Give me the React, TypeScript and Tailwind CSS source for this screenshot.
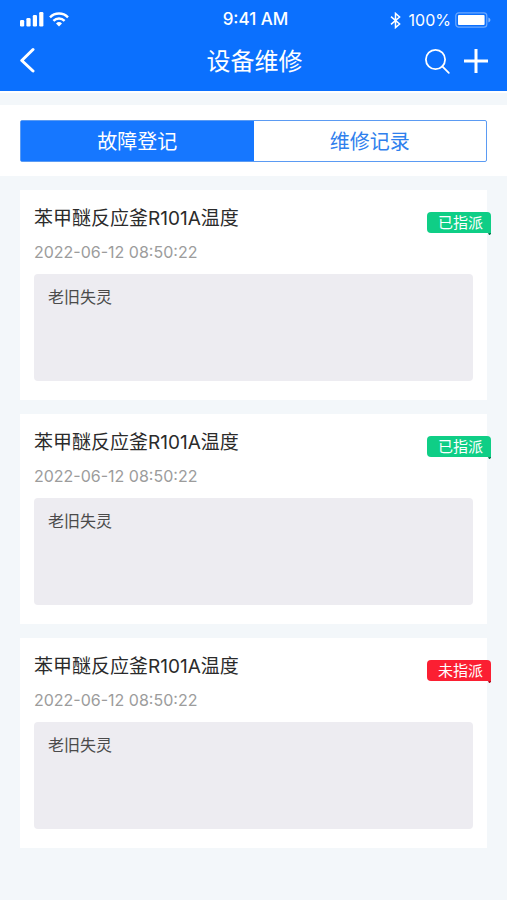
import { useState } from "react"

const tabs = ["故障登记", "维修记录"]

const records = [
  { id: 1, title: "苯甲醚反应釜R101A温度", time: "2022-06-12 08:50:22", note: "老旧失灵", assigned: true },
  { id: 2, title: "苯甲醚反应釜R101A温度", time: "2022-06-12 08:50:22", note: "老旧失灵", assigned: true },
  { id: 3, title: "苯甲醚反应釜R101A温度", time: "2022-06-12 08:50:22", note: "老旧失灵", assigned: false },
]

type RepairRecord = (typeof records)[number]

function StatusBar() {
  return (
    <div className="grid h-10 grid-cols-3 items-center pr-4 pl-5 font-['Inter','Liberation_Sans',sans-serif] text-base">
      <div className="flex items-center gap-1">
        <svg width="25" height="16" viewBox="0 0 25 16" fill="currentColor" aria-hidden="true">
          <rect x="0" y="8" width="4.2" height="6.500" rx="1.2" />
          <rect x="6.4" y="6" width="4.2" height="8.500" rx="1.2" />
          <rect x="12.8" y="3" width="4.2" height="11.500" rx="1.2" />
          <rect x="19.2" y="0" width="4.2" height="14.500" rx="1.2" />
        </svg>
        <svg width="20" height="16" viewBox="0 0 20 16" aria-hidden="true">
          <g fill="none" stroke="currentColor" strokeWidth="2.4">
            <path d="M1 5.300a12.700 12.700 0 0 1 18 0" />
            <path d="M4.400 8.800a7.900 7.900 0 0 1 11.200 0" />
          </g>
          <path d="M7 11.400a4.400 4.400 0 0 1 6 0L10 14.600z" fill="currentColor" />
        </svg>
      </div>
      <span className="text-center text-[17px] font-medium">9:41 AM</span>
      <div className="flex items-center justify-end gap-1">
        <svg width="11" height="17" viewBox="0 0 11 17" fill="none" stroke="currentColor" strokeWidth="1.5" aria-hidden="true">
          <path d="M1 4.600l8.600 7.400-4.100 3.600V1.400L9.600 5 1 12.400" />
        </svg>
        <span className="pl-1">100%</span>
        <svg width="36" height="16" viewBox="0 0 36 16" aria-hidden="true">
          <rect x="0.800" y="0.800" width="31" height="14.400" rx="3" fill="none" stroke="currentColor" strokeOpacity="0.4" strokeWidth="1.200" />
          <rect x="3" y="3" width="26.600" height="10" rx="1" fill="currentColor" />
          <path d="M33.400 5.500c1.200.400 2 1.300 2 2.500s-.800 2.100-2 2.500z" fill="currentColor" fillOpacity="0.5" />
        </svg>
      </div>
    </div>
  )
}

function NavBar() {
  return (
    <div className="grid h-[51px] grid-cols-3 items-start pr-[18px] pl-5">
      <button type="button" aria-label="返回" className="flex h-10 w-8 items-center">
        <svg width="20" height="26" viewBox="0 0 20 26" fill="none" stroke="currentColor" strokeWidth="3" strokeLinecap="round" strokeLinejoin="round">
          <path d="M13 2.500L1.800 13.500 13 24" />
        </svg>
      </button>
      <h1 className="text-center text-2xl leading-[43px]">设备维修</h1>
      <div className="flex h-[41px] items-center justify-end gap-2.5">
        <button type="button" aria-label="搜索">
          <svg width="28" height="28" viewBox="0 0 28 28" fill="none" stroke="currentColor" strokeWidth="1.8" strokeLinecap="round">
            <circle cx="12.500" cy="12.500" r="9.600" />
            <path d="M19.300 19.300l6.500 6.500" />
          </svg>
        </button>
        <button type="button" aria-label="新增">
          <svg width="28" height="28" viewBox="0 0 28 28" fill="none" stroke="currentColor" strokeWidth="3">
            <path d="M15 2v24M3 14h24" />
          </svg>
        </button>
      </div>
    </div>
  )
}

function StatusTag({ assigned }: { assigned: boolean }) {
  return (
    <div className="absolute top-[22px] -right-1">
      <div
        className={`h-[21px] w-16 rounded-l-sm rounded-tr-sm pr-2 text-right text-[15px] leading-[22px] text-white ${
          assigned ? "bg-[#0fce86]" : "bg-[#fb1f32]"
        }`}
      >
        {assigned ? "已指派" : "未指派"}
      </div>
      <svg
        className={`absolute top-full right-0 ${assigned ? "text-[#0a7a50]" : "text-[#b30d1c]"}`}
        width="3"
        height="2"
        viewBox="0 0 3 2"
        fill="currentColor"
        aria-hidden="true"
      >
        <path d="M0 0h3v.5L2 2H1z" />
      </svg>
    </div>
  )
}

function RecordCard({ record }: { record: RepairRecord }) {
  return (
    <li className="relative bg-white px-3.5 pt-3.5 pb-[19px]">
      <h2 className="text-[19px] leading-[30px] text-[#2b2b2b]">{record.title}</h2>
      <time className="mt-1.5 block text-base leading-6 text-[#9c9c9c]">{record.time}</time>
      <StatusTag assigned={record.assigned} />
      <p className="mt-2.5 min-h-[107px] rounded-sm bg-[#edecf1] px-3.5 py-[11px] text-base leading-6 text-[#4a4a4a]">
        {record.note}
      </p>
    </li>
  )
}

export default function App() {
  const [active, setActive] = useState(tabs[0])

  return (
    <div className="min-h-screen bg-[#f3f7fa] font-['Inter','Noto_Sans_CJK_SC',sans-serif]">
      <header className="border-b-2 border-white bg-[#0b70fe] text-white">
        <StatusBar />
        <NavBar />
      </header>

      <div className="mt-3 bg-white px-5 pt-[15px] pb-3.5">
        <div role="tablist" className="flex h-[42px] rounded-xs border border-[#5b9bf3]">
          {tabs.map((tab) => (
            <button
              key={tab}
              type="button"
              role="tab"
              aria-selected={active === tab}
              onClick={() => setActive(tab)}
              className={`flex-1 pt-0.5 text-xl ${active === tab ? "bg-[#1677ff] text-white" : "text-[#2f80ed]"}`}
            >
              {tab}
            </button>
          ))}
        </div>
      </div>

      <ul className="flex flex-col gap-3.5 px-5 py-3.5">
        {records.map((record) => (
          <RecordCard key={record.id} record={record} />
        ))}
      </ul>
    </div>
  )
}
